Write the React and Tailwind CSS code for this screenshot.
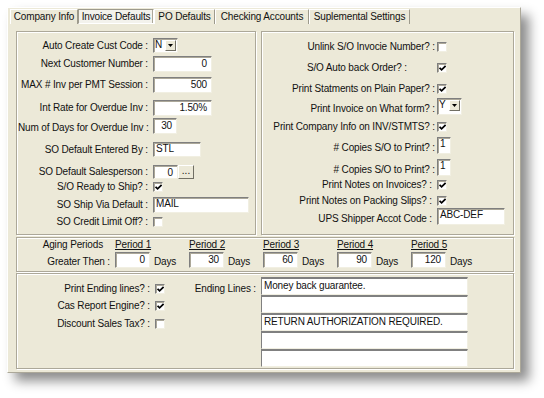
import React from "react";

const sunken =
  "bg-white border border-t-[#7F7F7F] border-l-[#7F7F7F] border-r-[#F1EFE2] border-b-[#F1EFE2] shadow-[inset_1px_1px_0_#ACA899]";
const raised =
  "bg-[#ECE9D8] border border-t-white border-l-white border-r-[#716F64] border-b-[#716F64]";
const panel =
  "border border-[#ACA899] shadow-[inset_1px_1px_0_#fff,1px_1px_0_#fff] pt-[1px] pl-[1px]";
const LL = "w-[130px] mr-[5px] text-right whitespace-nowrap";
const RL = "w-[172px] mr-[2px] text-right whitespace-nowrap";

function Check({ checked }) {
  return (
    <div className={`w-[10px] h-[10px] shrink-0 flex items-center justify-center ${sunken}`}>
      {checked && (
        <svg width="7" height="7" viewBox="0 0 7 7">
          <path d="M0.6 2.8 L2.6 4.9 L6.6 0.9" stroke="#000" strokeWidth="1.7" fill="none" />
        </svg>
      )}
    </div>
  );
}

function Combo({ value, cls }) {
  return (
    <div className={`flex shrink-0 ${cls} ${sunken}`}>
      <span className="flex-1 pl-[1px] leading-[11px]">{value}</span>
      <div className={`w-[11px] h-[11px] mt-[1px] mr-[1px] flex items-center justify-center ${raised}`}>
        <svg width="5" height="3" viewBox="0 0 5 3">
          <path d="M0 0 H5 L2.5 3 Z" fill="#000" />
        </svg>
      </div>
    </div>
  );
}

function Input({ value, cls, left }) {
  return (
    <div
      className={`shrink-0 whitespace-nowrap overflow-hidden leading-[12px] ${
        left ? "text-left pl-[2px]" : "text-right pr-[4px] pt-[1px]"
      } ${cls} ${sunken}`}
    >
      {value}
    </div>
  );
}

function Tab({ label, cls, selected }) {
  return (
    <div
      className={`h-[15px] flex items-center justify-center whitespace-nowrap ${cls} ${
        selected
          ? "bg-[#F3F2EC] border border-t-[#9D9A8C] border-l-[#9D9A8C] border-r-white border-b-white shadow-[inset_-1px_0_0_#ACA899]"
          : "border-t border-l border-r border-t-white border-l-white border-r-[#9D9A8C]"
      }`}
    >
      {label}
    </div>
  );
}

export default function App() {
  return (
    <div className="w-[544px] h-[398px] bg-white pl-[7px] pt-[7px] font-['Liberation_Sans',Arial,sans-serif] text-[10px] tracking-[-0.15px] leading-[12px] text-[#111]">
      <div className="w-[514px] h-[366px] bg-[#ECE9D8] border border-t-white border-l-white border-r-[#ACA899] border-b-[#ACA899] shadow-[8px_8px_11px_rgba(0,0,0,0.45)] flex flex-col">
        {/* Tabs */}
        <div className="flex mt-[1px] ml-[2px]">
          <Tab label="Company Info" cls="w-[68px]" />
          <Tab label="Invoice Defaults" cls="w-[76px]" selected />
          <Tab label="PO Defaults" cls="w-[61px]" />
          <Tab label="Checking Accounts" cls="w-[94px]" />
          <Tab label="Suplemental Settings" cls="w-[101px]" />
        </div>

        {/* Top panels */}
        <div className="flex mt-[7px] ml-[8px] gap-[5px]">
          {/* Left panel */}
          <div className={`w-[240px] h-[204px] flex flex-col ${panel}`}>
            <div className="mt-[5px] h-[15px] flex items-center">
              <div className={LL}>Auto Create Cust Code :</div>
              <Combo value="N" cls="w-[25px] h-[15px]" />
            </div>
            <div className="mt-[3px] h-[16px] flex items-center">
              <div className={LL}>Next Customer Number :</div>
              <Input value="0" cls="w-[59px] h-[16px]" />
            </div>
            <div className="mt-[5px] h-[16px] flex items-center">
              <div className={LL}>MAX # Inv per PMT Session :</div>
              <Input value="500" cls="w-[59px] h-[16px]" />
            </div>
            <div className="mt-[7px] h-[16px] flex items-center">
              <div className={LL}>Int Rate for Overdue Inv :</div>
              <Input value="1.50%" cls="w-[59px] h-[16px]" />
            </div>
            <div className="mt-[2px] h-[16px] flex items-end">
              <div className={LL}>Num of Days for Overdue Inv :</div>
              <Input value="30" cls="w-[24px] h-[16px]" />
            </div>
            <div className="mt-[8px] h-[15px] flex items-center">
              <div className={LL}>SO Default Entered By :</div>
              <Input value="STL" left cls="w-[48px] h-[15px]" />
            </div>
            <div className="mt-[8px] h-[14px] flex items-center">
              <div className={LL}>SO Default Salesperson :</div>
              <div className="flex h-[14px]">
                <Input value="0" cls="w-[25px] h-[14px]" />
                <div className={`w-[16px] h-[14px] flex items-center justify-center leading-[8px] ${raised}`}>
                  <span className="-mt-[3px] tracking-[0px]">...</span>
                </div>
              </div>
            </div>
            <div className="mt-[2px] h-[12px] flex items-center">
              <div className={LL}>S/O Ready to Ship? :</div>
              <Check checked />
            </div>
            <div className="mt-[4px] h-[16px] flex items-center">
              <div className={LL}>SO Ship Via Default :</div>
              <Input value="MAIL" left cls="w-[96px] h-[16px]" />
            </div>
            <div className="mt-[3px] h-[12px] flex items-center">
              <div className={LL}>SO Credit Limit Off? :</div>
              <Check />
            </div>
          </div>

          {/* Right panel */}
          <div className={`w-[253px] h-[204px] flex flex-col ${panel}`}>
            <div className="mt-[8px] h-[12px] flex items-center">
              <div className={RL}>Unlink S/O Invocie Number? :</div>
              <Check />
            </div>
            <div className="mt-[9px] h-[12px] flex items-center">
              <div className={`${RL} pr-[28px]`}>S/O Auto back Order? :</div>
              <Check checked />
            </div>
            <div className="mt-[9px] h-[12px] flex items-center">
              <div className={RL}>Print Statments on Plain Paper? :</div>
              <Check checked />
            </div>
            <div className="mt-[3px] h-[17px] flex items-end">
              <div className={RL}>Print Invoice on What form? :</div>
              <Combo value="Y" cls="w-[25px] h-[17px]" />
            </div>
            <div className="mt-[6px] h-[12px] flex items-center">
              <div className={RL}>Print Company Info on INV/STMTS? :</div>
              <Check checked />
            </div>
            <div className="mt-[4px] h-[17px] flex items-end">
              <div className={RL}>{"# Copies S/O to Print? :"}</div>
              <Input value="1" left cls="w-[14px] h-[17px]" />
            </div>
            <div className="mt-[5px] h-[17px] flex items-end">
              <div className={RL}>{"# Copies S/O to Print? :"}</div>
              <Input value="1" left cls="w-[14px] h-[17px]" />
            </div>
            <div className="mt-[3px] h-[12px] flex items-center">
              <div className={`${RL} pr-[3px]`}>Print Notes on Invoices? :</div>
              <Check checked />
            </div>
            <div className="mt-[4px] h-[12px] flex items-center">
              <div className={`${RL} pr-[3px]`}>Print Notes on Packing Slips? :</div>
              <Check checked />
            </div>
            <div className="mt-[1px] h-[17px] flex items-end">
              <div className={`${RL} pr-[3px]`}>UPS Shipper Accot Code :</div>
              <Input value="ABC-DEF" left cls="w-[68px] h-[17px]" />
            </div>
          </div>
        </div>

        {/* Aging periods */}
        <div className={`mt-[2px] ml-[8px] w-[498px] h-[35px] flex flex-col ${panel}`}>
          <div className="h-[12px] flex items-center">
            <div className="w-[97px] pr-[12px] text-right whitespace-nowrap">Aging Periods</div>
            {["Period 1", "Period 2", "Period 3", "Period 4", "Period 5"].map((p) => (
              <div key={p} className="w-[74px] underline underline-offset-[1px]">
                {p}
              </div>
            ))}
          </div>
          <div className="mt-[1px] h-[16px] flex items-end">
            <div className="w-[97px] pr-[5px] text-right whitespace-nowrap">Greater Then :</div>
            {["0", "30", "60", "90", "120"].map((v) => (
              <div key={v} className="w-[74px] flex items-end">
                <Input value={v} cls="w-[35px] h-[16px]" />
                <span className="ml-[4px]">Days</span>
              </div>
            ))}
          </div>
        </div>

        {/* Bottom panel */}
        <div className={`mt-[1px] ml-[8px] w-[498px] h-[96px] flex ${panel}`}>
          <div className="flex flex-col">
            <div className="mt-[8px] h-[12px] flex items-center">
              <div className="w-[132px] mr-[5px] text-right whitespace-nowrap">Print Ending lines? :</div>
              <Check checked />
            </div>
            <div className="mt-[5px] h-[12px] flex items-center">
              <div className="w-[132px] mr-[5px] text-right whitespace-nowrap">Cas Report Engine? :</div>
              <Check checked />
            </div>
            <div className="mt-[6px] h-[12px] flex items-center">
              <div className="w-[132px] mr-[5px] text-right whitespace-nowrap">Discount Sales Tax? :</div>
              <Check />
            </div>
          </div>
          <div className="mt-[8px] h-[12px] w-[91px] mr-[5px] text-right whitespace-nowrap">Ending Lines :</div>
          <div className="mt-[2px] flex flex-col w-[207px]">
            {["Money back guarantee.", "", "RETURN AUTHORIZATION REQUIRED.", "", ""].map((t, i) => (
              <div
                key={i}
                className="h-[18px] bg-white border-t-2 border-l border-r border-b border-t-[#808080] border-l-[#808080] border-r-[#F1EFE2] border-b-[#F1EFE2] pl-[2px] pt-[1px] leading-[12px] whitespace-nowrap overflow-hidden"
              >
                {t}
              </div>
            ))}
          </div>
        </div>
      </div>
    </div>
  );
}
